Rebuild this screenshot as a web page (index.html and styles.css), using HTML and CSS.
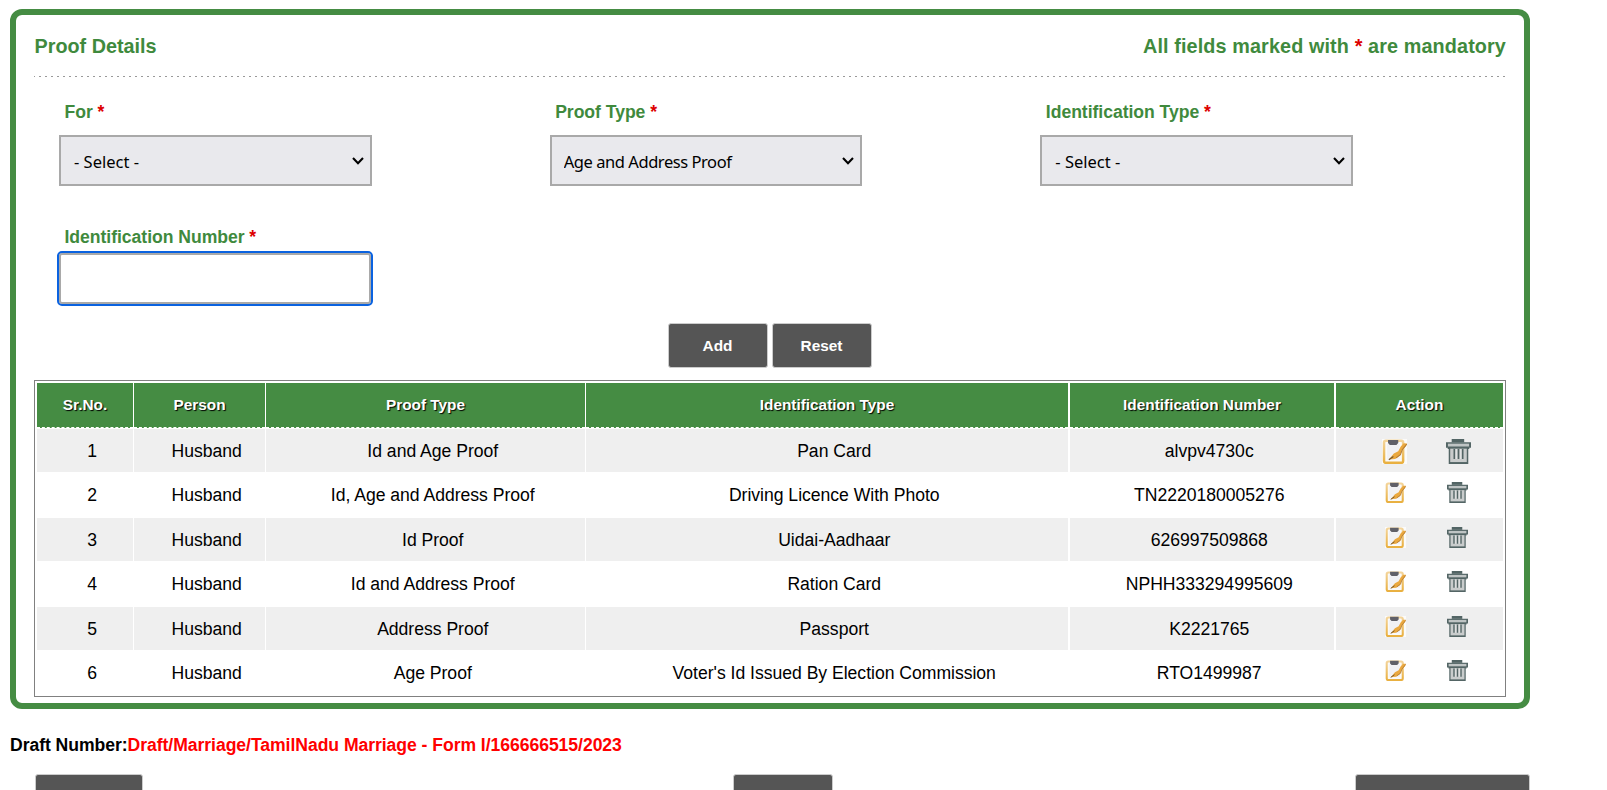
FILE: index.html
```html
<!DOCTYPE html>
<html lang="en">
<head>
<meta charset="utf-8">
<title>Proof Details</title>
<link rel="stylesheet" href="styles.css">
</head>
<body>
<svg class="defs" aria-hidden="true">
  <defs>
    <linearGradient id="gold" x1="0" y1="0" x2="0" y2="1"><stop offset="0" stop-color="#f3d49a"/><stop offset="1" stop-color="#e9b040"/></linearGradient>
    <symbol id="edit" viewBox="0 0 22 22">
      <rect width="22" height="22" fill="#fff" opacity=".75"/>
      <rect x="1.800" y="1.500" width="16.800" height="19.500" rx="1.600" fill="#fafafa" stroke="url(#gold)" stroke-width="2.200"/>
      <path d="M4.500 4h11v14h-11z" fill="#f1f1f4"/>
      <path d="M5.300 .8h9v2.800l-1.600 1.600H6.900L5.300 3.600z" fill="#606068"/>
      <path d="M22 4l-2.800-.2-2.700 2.700-2.200 4.300-3.900 2-4.400 5.200 5.600-.4 4.500-3.200 1-4 3.600-3.600z" fill="#eaa83f"/>
      <path d="M21.800 4.500L17.800 9.500l-1.600 4.300-3.800 2.800" fill="none" stroke="#b57d36" stroke-width=".9"/>
      <path d="M6 18.200l4-2.800" stroke="#6f5533" stroke-width="1"/>
    </symbol>
    <symbol id="bin" viewBox="0 0 22 22">
      <path d="M5 0h11v3H5z" fill="#536565"/>
      <path d="M0 2.800h22v5h-1.500v1H1.500v-1H0z" fill="#536565"/>
      <path d="M1.700 4.100h18.600v2.500H1.700z" fill="#bfc4c4"/>
      <path d="M2.400 8.500h17.200V22H2.400z" fill="#536565"/>
      <path d="M3.700 8.500h14.600v11.800H3.700z" fill="#c9cccc"/>
      <path d="M7.300 8.800v8.700M11 8.800v8.700M14.700 8.800v8.700" stroke="#536565" stroke-width="1.400"/>
      <path d="M9.100 8.800v8.700M12.900 8.800v8.700" stroke="#e3e5e5" stroke-width="1"/>
    </symbol>
    <symbol id="chevron" viewBox="0 0 12 8"><path d="M1 1l5 5.200L11 1" fill="none" stroke="#000" stroke-width="2.100"/></symbol>
  </defs>
</svg>
<main class="panel">
  <header class="panel-head">
    <h1>Proof Details</h1>
    <p>All fields marked with <b class="req">*</b> are mandatory</p>
  </header>
  <svg class="rule" aria-hidden="true"><line x1="-1" y1=".5" x2="1472" y2=".5" /></svg>
  <form class="fields">
    <div class="field"><label for="who">For <span class="req">*</span></label>
      <div class="pick"><select id="who"><option>- Select -</option></select><svg><use href="#chevron"/></svg></div></div>
    <div class="field"><label for="proof">Proof Type <span class="req">*</span></label>
      <div class="pick"><select id="proof" class="tight"><option>Age and Address Proof</option></select><svg><use href="#chevron"/></svg></div></div>
    <div class="field"><label for="idtype">Identification Type <span class="req">*</span></label>
      <div class="pick"><select id="idtype"><option>- Select -</option></select><svg><use href="#chevron"/></svg></div></div>
    <div class="field number"><label for="idno">Identification Number <span class="req">*</span></label>
      <input id="idno" type="text"></div>
  </form>
  <div class="actions"><button>Add</button><button>Reset</button></div>
  <section class="table">
    <div class="row head"><div>Sr.No.</div><div>Person</div><div>Proof Type</div><div>Identification Type</div><div>Identification Number</div><div>Action</div></div>
    <div class="row big"><div>1</div><div>Husband</div><div>Id and Age Proof</div><div>Pan Card</div><div>alvpv4730c</div><div><svg><use href="#edit"/></svg><svg><use href="#bin"/></svg></div></div>
    <div class="row"><div>2</div><div>Husband</div><div>Id, Age and Address Proof</div><div>Driving Licence With Photo</div><div>TN2220180005276</div><div><svg><use href="#edit"/></svg><svg><use href="#bin"/></svg></div></div>
    <div class="row"><div>3</div><div>Husband</div><div>Id Proof</div><div>Uidai-Aadhaar</div><div>626997509868</div><div><svg><use href="#edit"/></svg><svg><use href="#bin"/></svg></div></div>
    <div class="row"><div>4</div><div>Husband</div><div>Id and Address Proof</div><div>Ration Card</div><div>NPHH333294995609</div><div><svg><use href="#edit"/></svg><svg><use href="#bin"/></svg></div></div>
    <div class="row"><div>5</div><div>Husband</div><div>Address Proof</div><div>Passport</div><div>K2221765</div><div><svg><use href="#edit"/></svg><svg><use href="#bin"/></svg></div></div>
    <div class="row"><div>6</div><div>Husband</div><div>Age Proof</div><div>Voter's Id Issued By Election Commission</div><div>RTO1499987</div><div><svg><use href="#edit"/></svg><svg><use href="#bin"/></svg></div></div>
  </section>
</main>
<p class="draft">Draft Number:<span>Draft/Marriage/TamilNadu Marriage - Form I/166666515/2023</span></p>
<footer class="nav"><button class="w-left" aria-label="Back"></button><button class="w-mid" aria-label="Save"></button><button class="w-right" aria-label="Next"></button></footer>
</body>
</html>
```
FILE: styles.css
```css
* { box-sizing: border-box; }
body { margin: 0; height: 790px; overflow: hidden; padding: 9px 0 0 10px; background: #fff; color: #000; font: 17.6px "Liberation Sans", Arial, sans-serif; }
.defs { position: absolute; width: 0; height: 0; }
h1, p { margin: 0; }
.panel { width: 1520px; height: 700px; border: 6px solid #458c43; border-radius: 12px; padding: 0 18px; }
.panel-head { display: flex; justify-content: space-between; height: 61px; padding-top: 19px; color: #3f8a3d; font-size: 19.8px; font-weight: bold; line-height: 24px; }
.panel-head p { letter-spacing: .12px; }
h1 { padding-left: .5px; font-size: inherit; line-height: inherit; }
.req { color: #d00; }
.rule { display: block; width: 1472px; height: 1px; }
.rule line { stroke: #999; stroke-width: 1; stroke-dasharray: 2 4; }
.fields { display: grid; grid-template-columns: repeat(3, 1fr); grid-template-rows: 125px 121px; }
.field { padding: 25px 0 0 25px; }
.field label { display: block; height: 33px; padding-left: 5.5px; color: #3f8a3d; font-weight: bold; line-height: 21px; letter-spacing: -.04px; }
.number label { height: 26px; }
.pick { display: grid; width: 312.6px; height: 51px; }
.pick > * { grid-area: 1 / 1; }
.pick svg { width: 12px; height: 8px; align-self: center; justify-self: end; margin-right: 8px; }
select { appearance: none; width: 100%; height: 51px; padding: 2px 12px 0 13px; border: 2px solid #a9a9a9; border-radius: 0; background: #e9e9ed; color: #000; font: 16.5px "Noto Sans", sans-serif; }
.tight { padding-left: 12px; letter-spacing: -.44px; }
input { display: block; width: 312px; height: 51px; padding: 0 12px; border: 2px solid #a9a9a9; border-radius: 3px; outline: 2px solid #0a62e0; font: inherit; }
.actions { display: flex; gap: 4px; justify-content: center; height: 57px; margin-right: 1px; }
button { width: 100px; height: 45px; padding: 0; border: 1px solid #ccc; border-radius: 3px; background: #555; color: #fff; font: bold 15.4px "Liberation Sans", Arial, sans-serif; }
.table { display: flex; flex-direction: column; gap: 1.5px; width: 1472px; height: 317px; padding: 2px; border: 1px solid #808080; }
.row { display: grid; grid-template-columns: 97px 132px 320px 484px 266px 167px; height: 43px; flex: none; }
.row > div { display: flex; align-items: center; justify-content: center; margin-right: 1px; padding-left: 14.5px; letter-spacing: -.02px; }
.row > div:nth-child(n+4) { margin-right: 2px; }
.row > div:last-child { margin-right: 0; }
.row:nth-child(even) > div { padding-top: 1px; background: #efefef; }
.row.head { height: 44.5px; }
.row.head > div { padding: 0; border-bottom: 1px dashed #fff; background: #458c43; color: #fff; font-size: 15.4px; font-weight: bold; text-shadow: 1px 1px 1px #000; }
.row svg { width: 21px; height: 21px; flex: none; margin-bottom: 5px; }
.row svg + svg { margin-left: 41px; }
.row:nth-child(even) svg { margin-bottom: 6px; }
.row.big:nth-child(even) svg { width: 25px; height: 25px; margin: 1px 0 0; }
.row.big:nth-child(even) svg + svg { margin-left: 39px; }
.draft { margin-top: 26px; height: 39px; font-weight: bold; line-height: 21px; letter-spacing: -.055px; }
.draft span { color: #f00; }
.nav { display: grid; grid-template-columns: 698px 622px 175px; padding-left: 25px; }
.w-left { width: 108px; }
.w-right { width: 175px; }
```
